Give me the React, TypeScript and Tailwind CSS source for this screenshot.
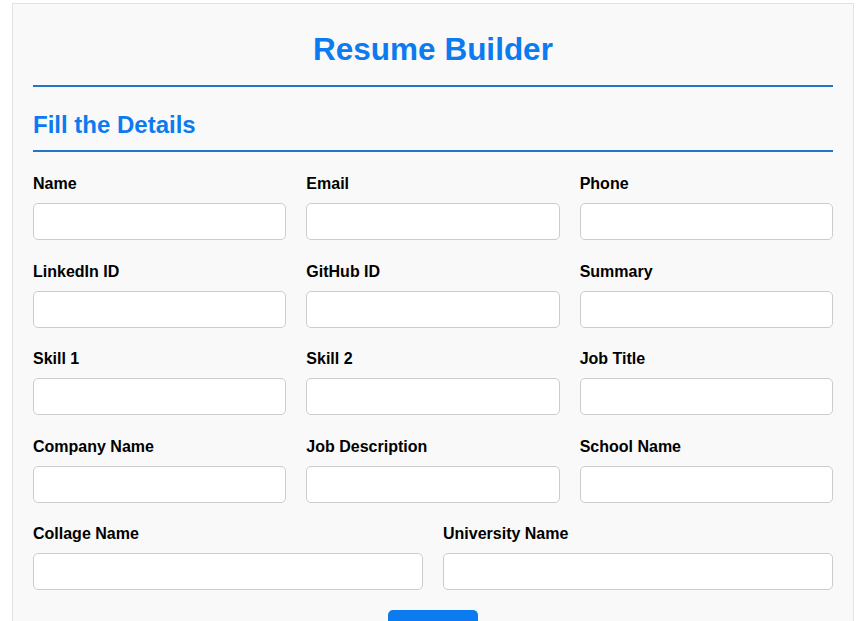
import React from 'react';

const topFields = [
  'Name',
  'Email',
  'Phone',
  'LinkedIn ID',
  'GitHub ID',
  'Summary',
  'Skill 1',
  'Skill 2',
  'Job Title',
  'Company Name',
  'Job Description',
  'School Name',
];

const bottomFields = ['Collage Name', 'University Name'];

const Field: React.FC<{ label: string }> = ({ label }) => (
  <div>
    <label className="block text-[16px] leading-[18px] font-bold text-black mb-[10px]">{label}</label>
    <input
      type="text"
      className="block w-full h-[37px] bg-white border border-[#cccccc] rounded-[5px] px-[10px] text-[16px] outline-none"
    />
  </div>
);

const App: React.FC = () => {
  return (
    <div className="min-h-screen bg-white pt-[3px]" style={{ fontFamily: '"Liberation Sans", Arial, sans-serif' }}>
      <div className="ml-[12px] w-[842px] bg-[#f9f9f9] border border-[#e3e3e3] px-[20px] pt-[27px] pb-[40px]">
        <h1 className="text-center text-[31.5px] leading-[36px] font-bold text-[#0b7bef]">Resume Builder</h1>
        <div className="h-[2px] bg-[#2276c8] mt-[18px]" />

        <h2 className="text-[24px] leading-[28px] font-bold text-[#0b7bef] mt-[24px]">Fill the Details</h2>
        <div className="h-[2px] bg-[#2276c8] mt-[11px]" />

        <form className="mt-[23px]" onSubmit={(e) => e.preventDefault()}>
          <div className="grid grid-cols-3 gap-x-[20px] gap-y-[22.5px]">
            {topFields.map((f) => (
              <Field key={f} label={f} />
            ))}
          </div>
          <div className="grid grid-cols-2 gap-x-[20px] mt-[22.5px]">
            {bottomFields.map((f) => (
              <Field key={f} label={f} />
            ))}
          </div>
          <div className="flex justify-center mt-[20px]">
            <button
              type="submit"
              className="bg-[#0b7bef] text-white text-[16px] px-[20px] py-[10px] rounded-[5px]"
            >
              Submit
            </button>
          </div>
        </form>
      </div>
    </div>
  );
};

export default App;
